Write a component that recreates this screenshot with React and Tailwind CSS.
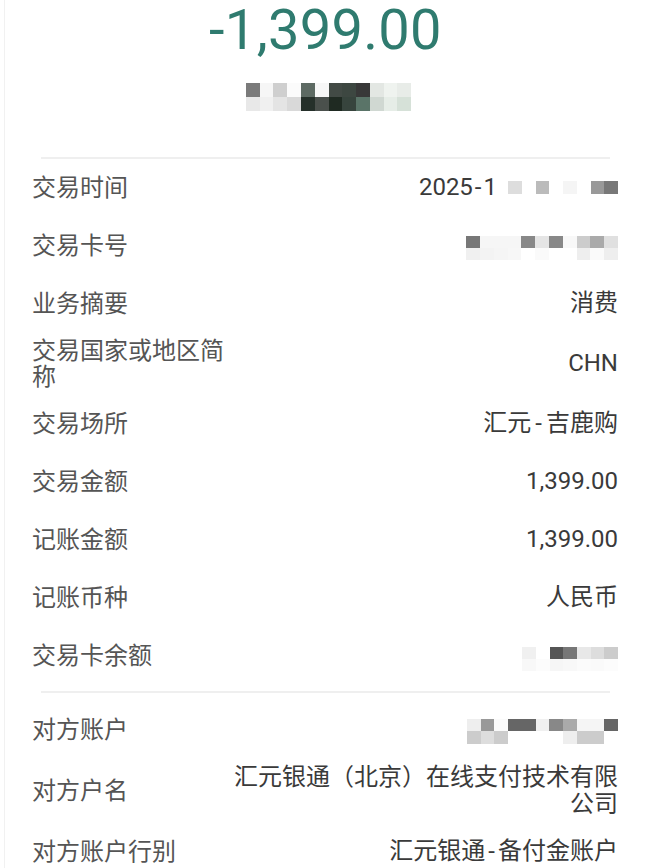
import React from "react";

const FONT = { fontFamily: 'Roboto, "Noto Sans CJK SC", sans-serif' };

function Mosaic({ rows, w = 13.8, h = 13.5 }) {
  return (
    <div className="flex flex-col">
      {rows.map((r, i) => (
        <div key={i} className="flex">
          {r.map((c, j) => (
            <div key={j} style={{ width: w, height: h, background: c }} />
          ))}
        </div>
      ))}
    </div>
  );
}

function Row({ label, children, tall }) {
  return (
    <div
      className={
        "flex items-center pl-[27px] pr-[32px] py-[5px] " +
        (tall ? "min-h-[62px]" : "min-h-[58px]")
      }
    >
      <div className="w-[196px] shrink-0 text-[24px] leading-[26px] text-[#555555]">
        {label}
      </div>
      <div className="flex-1 min-w-0 flex justify-end text-right text-[24px] leading-[27px] text-[#3a3a3a]">
        {children}
      </div>
    </div>
  );
}

export default function App() {
  return (
    <div className="w-[650px] h-[868px] overflow-hidden bg-white" style={FONT}>
      <div className="ml-[4px] border-l border-[#f1f1f1] h-full">
        <div className="flex justify-center pr-[4px]">
          <div className="text-[56px] leading-[1.1] text-[#2f7b6f] tracking-[0.3px]">
            -1,399.00
          </div>
        </div>
        <div className="mt-[21px] flex justify-center pl-[2px]">
          <Mosaic
            w={13.8}
            h={14}
            rows={[
              ["#7a7a7a", "#f6f6f6", "#cfcfcf", "#fbfbfb", "#5d6a63", "#f7f7f7", "#424a45", "#3d4741", "#383838", "#e3e7e3", "#eff3ef", "#e8ece8"],
              ["#e8e8e8", "#f0f0f0", "#e4e4e4", "#d9d9d9", "#25302a", "#4a504c", "#1f2a22", "#37443d", "#5a7468", "#d0d8d2", "#e6ede7", "#d6e1d8"],
            ]}
          />
        </div>
        <div className="mt-[46px] ml-[36px] mr-[40px] h-[2px] bg-[#efefef]" />

        <Row label="交易时间">
          <div className="flex items-center">
            <span>
              2025<span className="mx-[2px]">-</span>1
            </span>
            <div className="ml-[11px] flex items-center">
              <Mosaic
                w={13.75}
                h={13}
                rows={[["#dddddd", "#ffffff", "#bbbbbb", "#ffffff", "#f5f5f5", "#ffffff", "#999999", "#787878"]]}
              />
            </div>
          </div>
        </Row>
        <Row label="交易卡号">
          <div className="pt-[4px]">
            <Mosaic
              w={13.8}
              h={12}
              rows={[
                ["#777777", "#f6f6f6", "#f6f6f6", "#f6f6f6", "#888888", "#e5e5e5", "#888888", "#f8f8f8", "#cccccc", "#aaaaaa", "#e0e0e0"],
                ["#f0f0f0", "#f3f3f3", "#f5f5f5", "#f7f7f7", "#ffffff", "#fafafa", "#ffffff", "#ffffff", "#eeeeee", "#fafafa", "#eeeeee"],
              ]}
            />
          </div>
        </Row>
        <Row label="业务摘要">消费</Row>
        <Row label="交易国家或地区简称" tall>
          CHN
        </Row>
        <Row label="交易场所">
          <span>
            汇元<span className="mx-[4px]">-</span>吉鹿购
          </span>
        </Row>
        <Row label="交易金额">1,399.00</Row>
        <Row label="记账金额">1,399.00</Row>
        <Row label="记账币种">人民币</Row>
        <Row label="交易卡余额">
          <div className="pt-[6px]">
            <Mosaic
              w={13.7}
              h={12}
              rows={[
                ["#f0f0f0", "#ffffff", "#555555", "#777777", "#e8e8e8", "#dddddd", "#cccccc"],
                ["#f8f8f8", "#fcfcfc", "#f6f6f6", "#f8f8f8", "#fbfbfb", "#fafafa", "#fcfcfc"],
              ]}
            />
          </div>
        </Row>

        <div className="mt-[6px] ml-[36px] mr-[40px] h-[2px] bg-[#efefef]" />
        <div className="mt-[8px]">
          <Row label="对方账户">
            <div className="pt-[3px]">
              <Mosaic
                w={13.75}
                h={12.5}
                rows={[
                  ["#eeeeee", "#999999", "#fafafa", "#666666", "#666666", "#f0f0f0", "#888888", "#aaaaaa", "#f5f5f5", "#f5f5f5", "#666666"],
                  ["#cccccc", "#dddddd", "#cccccc", "#ffffff", "#ffffff", "#ffffff", "#ffffff", "#eeeeee", "#cccccc", "#cccccc", "#ffffff"],
                ]}
              />
            </div>
          </Row>
          <Row label="对方户名" tall>
            <div>汇元银通（北京）在线支付技术有限公司</div>
          </Row>
          <Row label="对方账户行别">
            <span>
              汇元银通<span className="mx-[3px]">-</span>备付金账户
            </span>
          </Row>
        </div>
      </div>
    </div>
  );
}
